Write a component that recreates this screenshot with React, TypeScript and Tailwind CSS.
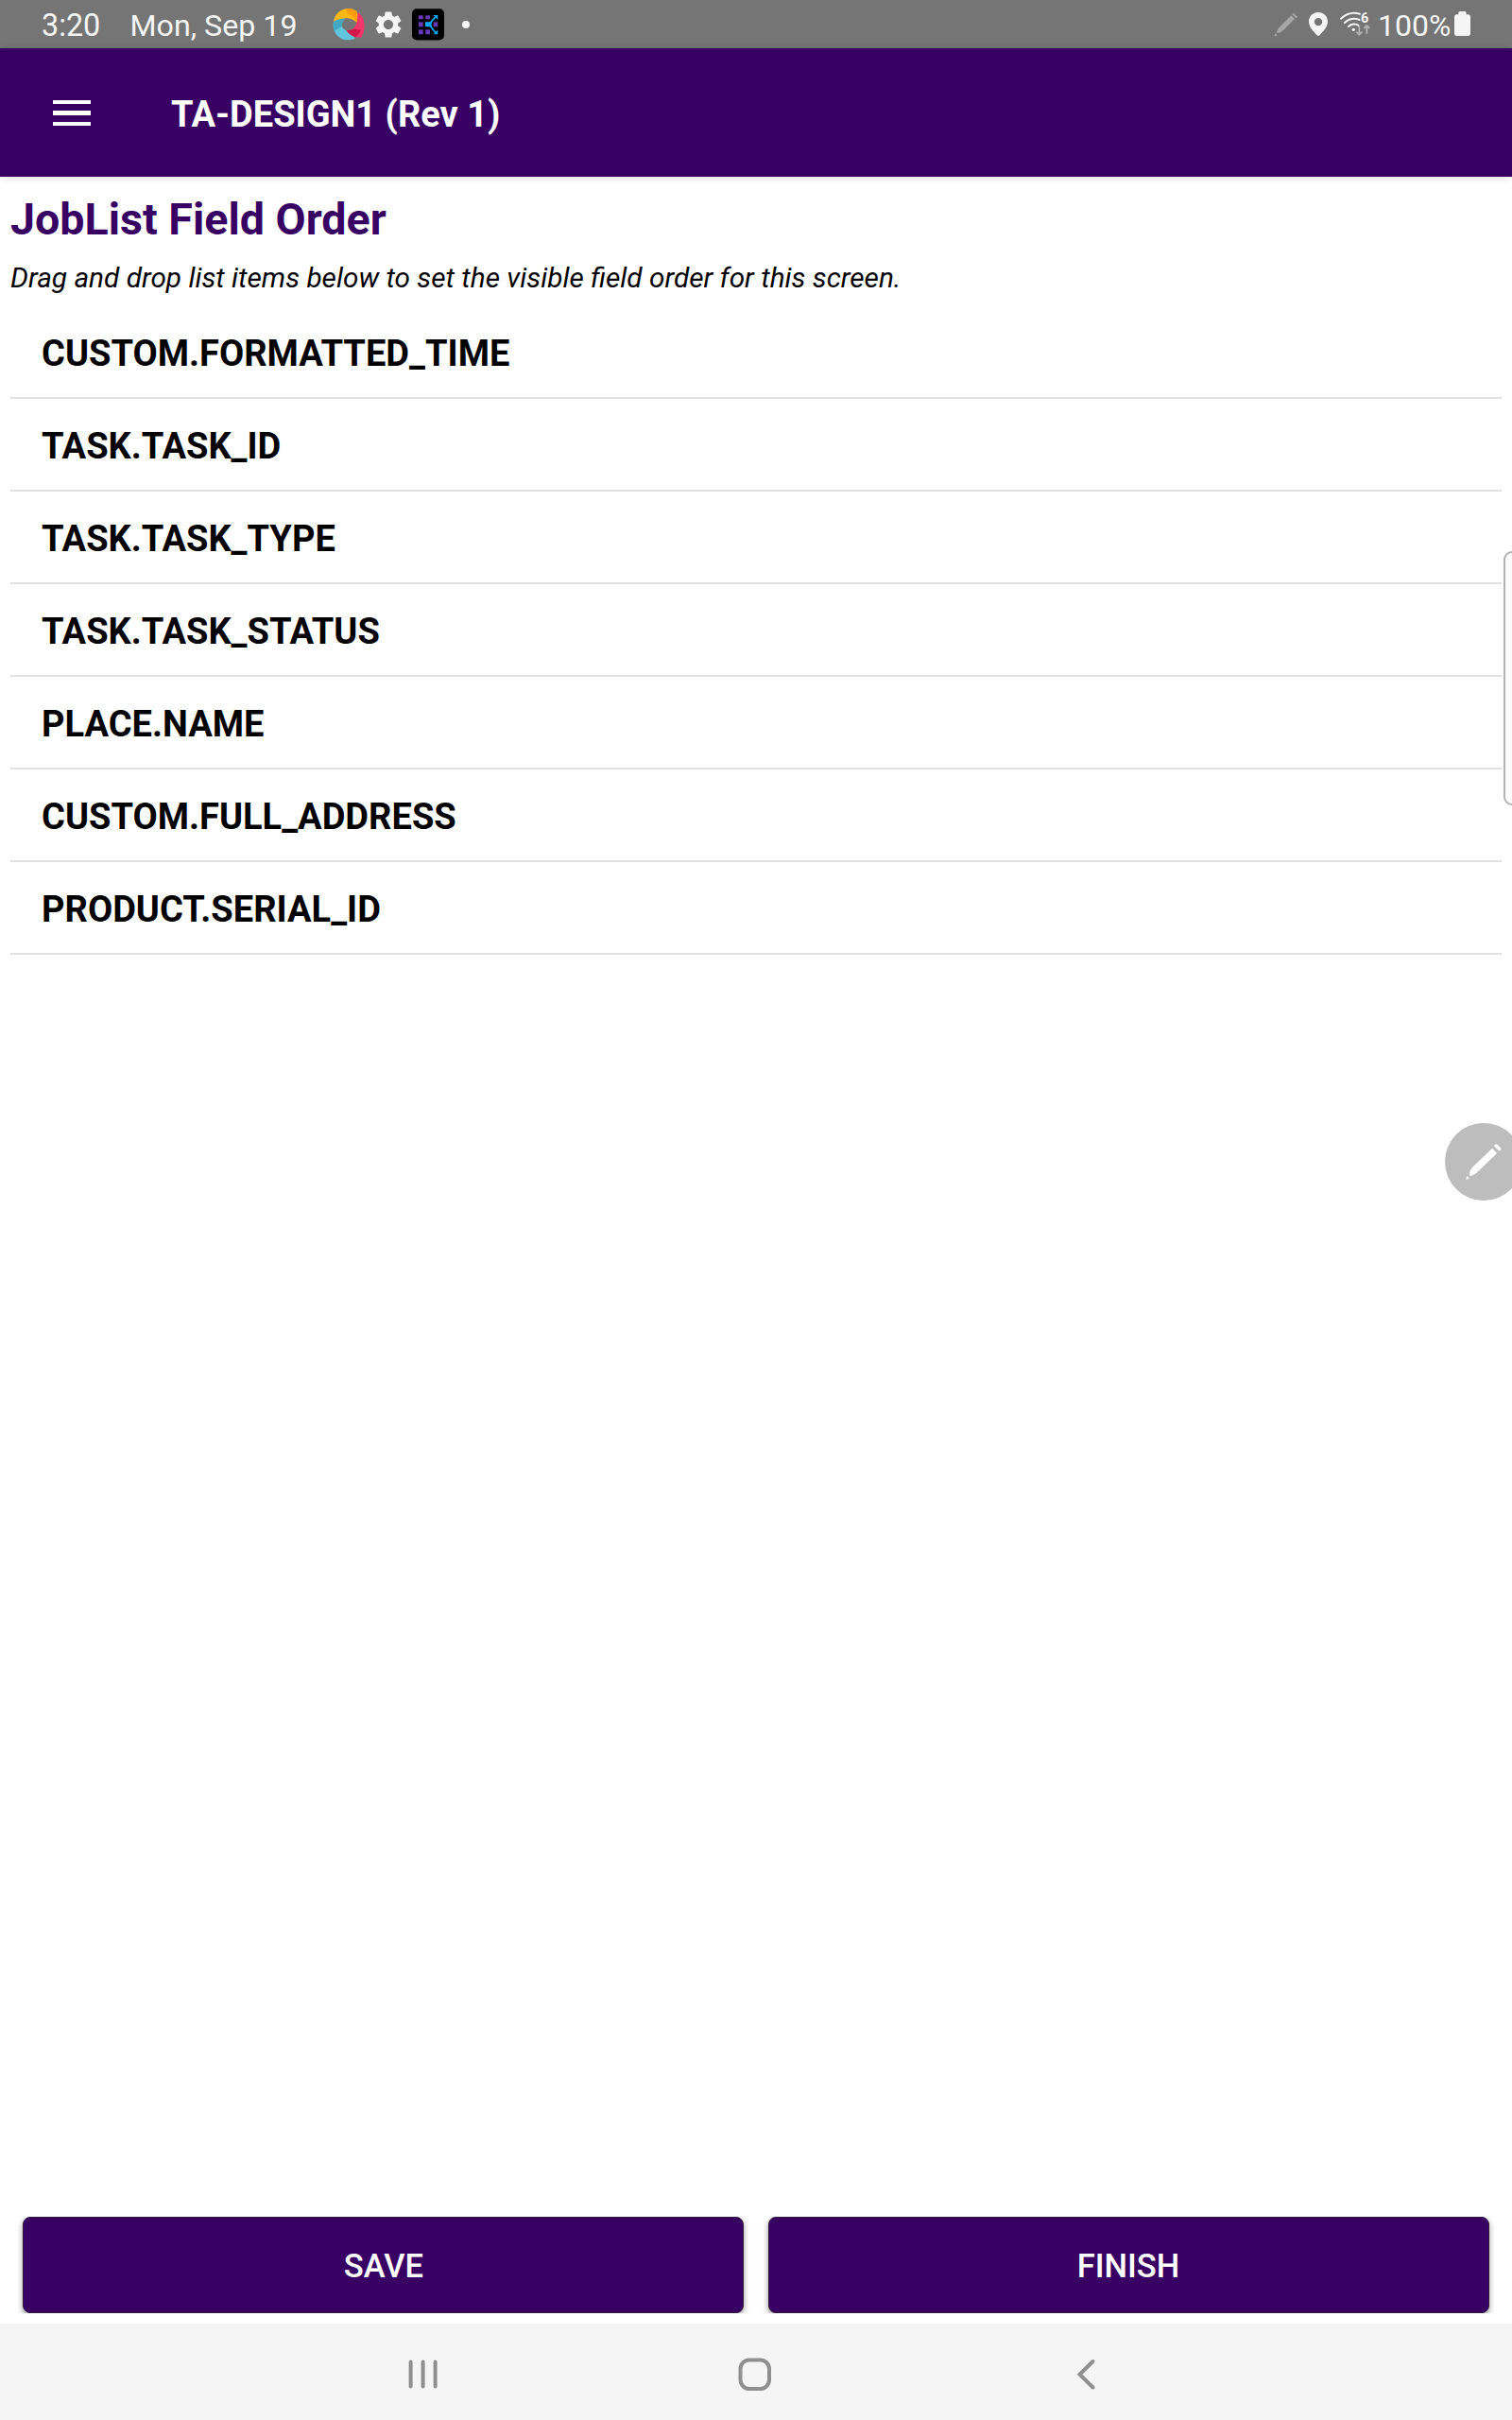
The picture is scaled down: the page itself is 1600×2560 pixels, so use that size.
import React from "react";
import { MdSettings } from "react-icons/md";

const fields = [
  "CUSTOM.FORMATTED_TIME",
  "TASK.TASK_ID",
  "TASK.TASK_TYPE",
  "TASK.TASK_STATUS",
  "PLACE.NAME",
  "CUSTOM.FULL_ADDRESS",
  "PRODUCT.SERIAL_ID",
];

function SwirlIcon() {
  return (
    <svg viewBox="6 15 102 102" className="h-[34px] w-[34px]">
      <path d="M8 66 C8 62 8 60 9 58 C20 50 32 46 46 47 C32 60 32 76 46 83 C60 90 70 102 77 110 C66 115 50 116 40 113 C20 106 7 88 8 66Z" fill="#62c6dd" />
      <path d="M9 58 C20 50 32 46 46 47 C37 55 34 64 36 73 C26 76 16 82 12 88 C8 79 7 68 9 58Z" fill="#42a9c4" />
      <path d="M9 56 C13 32 32 15 56 15 C68 15 77 19 83 25 C87 36 86 48 82 60 C72 48 58 44 46 46 C31 47 18 51 9 56Z" fill="#fdb813" />
      <path d="M50 15 C66 14 77 19 83 25 C87 36 86 48 82 60 C76 48 70 36 50 28Z" fill="#ff9d0a" />
      <path d="M85 26 C100 36 108 52 107 72 C106 84 103 94 98 106 C90 108 80 107 70 102 C60 97 54 92 50 84 C66 86 80 76 84 53 C86 44 86 34 85 26Z" fill="#f0386b" />
      <path d="M50 84 C60 86 68 83 74 78 C84 82 90 84 97 82 C92 94 86 101 78 105 C75 104 73 103 70 102 C60 97 54 92 50 84Z" fill="#d4174a" />
    </svg>
  );
}

function GridAppIcon() {
  return (
    <svg viewBox="288 26 102 102" className="h-[34px] w-[34px]">
      <rect x="288" y="26.5" width="102" height="100" rx="15" fill="#000" />
      <g fill="#673ab7">
        <rect x="309" y="48" width="14" height="12" />
        <rect x="331" y="48" width="14" height="12" />
        <rect x="309" y="69" width="14" height="15" />
        <rect x="309" y="93" width="14" height="15" />
        <rect x="331" y="93" width="14" height="15" />
        <rect x="356" y="69" width="14" height="15" />
      </g>
      <path d="M344 77 C350 65 354 60 363 53 M344 77 C350 88 354 94 363 102" fill="none" stroke="#03a9f4" strokeWidth="5" />
      <g fill="#03a9f4">
        <path d="M330 69 H344 L350 66 V88 L344 84 H330Z" />
        <path d="M355 47 H370 V61 Z" />
        <path d="M370 94 V108 H355 Z" />
      </g>
    </svg>
  );
}

function StatusPen() {
  return (
    <svg viewBox="21 -12 84 153" className="h-[51px] w-7" fill="#a6a6a6">
      <path d="M33 93 C34 83 38 78 44 72 L79 37 L90 48 L55 83 C48 89 43 93 33 93Z" />
      <path d="M82 33 L86 29 L99 41 L94 46Z" />
      <path d="M29 93 L35 99 L29 103 L25 102 Z" />
    </svg>
  );
}

function StatusPin() {
  return (
    <svg viewBox="132 -12 66 153" className="ml-[9px] h-[51px] w-[22px]">
      <path
        fillRule="evenodd"
        fill="#f5f5f5"
        d="M165 27 C148 27 135 40 135 56 C135 75 150 86 161 100 Q165 104 169 100 C180 86 195 75 195 56 C195 40 182 27 165 27Z M165 45 A12.5 12.5 0 1 1 165 70 A12.5 12.5 0 1 1 165 45Z"
      />
    </svg>
  );
}

function StatusWifi() {
  return (
    <svg viewBox="231 -12 102 153" className="ml-[11px] h-[51px] w-[34px]">
      <g fill="none" stroke="#f5f5f5" strokeWidth="6" strokeLinecap="round">
        <path d="M237 47 C254 31 276 26 297 32" />
        <path d="M249 60 C262 48 280 45 296 51" />
        <path d="M261 72 C270 63 284 62 293 69" />
      </g>
      <circle cx="277" cy="82" r="5" fill="#f5f5f5" />
      <text x="300" y="60" fontSize="43" fontWeight="700" fill="#f5f5f5" fontFamily="Roboto, sans-serif">6</text>
      <g fill="none" stroke="#b0b0b0" strokeWidth="5.5">
        <path d="M295 72 V97 M286 89 L295 98 L304 89" />
        <path d="M319 95 V70 M310 78 L319 69 L328 78" />
      </g>
    </svg>
  );
}

function Battery() {
  return (
    <svg viewBox="657 0 51 153" className="ml-[3px] h-[51px] w-[17px]" fill="#f5f5f5">
      <path d="M670 46 V41 Q670 36 675 36 H690 Q695 36 695 41 V46 H700 Q708 46 708 54 V106 Q708 114 700 114 H665 Q657 114 657 106 V54 Q657 46 665 46Z" />
    </svg>
  );
}

function ActionButton({ children }: { children: React.ReactNode }) {
  return (
    <button className="flex h-[102px] flex-1 items-center justify-center rounded-lg border-[1.5px] border-[#341a3b] bg-[#380063] pt-[3px] text-[34.6px] font-medium text-white shadow-[0_3px_6px_rgba(0,0,0,0.4)]">
      {children}
    </button>
  );
}

export default function App() {
  return (
    <div className="relative flex h-[2560px] w-[1600px] flex-col overflow-hidden bg-white font-[Roboto,sans-serif]">
      <div className="flex h-[51px] shrink-0 items-center bg-[#757575] pr-11 pl-11 text-[32.3px] leading-none text-[#f5f5f5]">
        <span className="w-[93.5px] pt-[3px]">3:20</span>
        <span className="w-[214.5px] pt-[3px] text-[32.2px] whitespace-nowrap">Mon, Sep 19</span>
        <div className="flex items-center gap-2">
          <SwirlIcon />
          <MdSettings className="h-[34px] w-[34px]" />
          <GridAppIcon />
        </div>
        <span className="ml-[19px] h-2 w-2 rounded-full bg-[#f5f5f5]" />
        <div className="ml-auto flex items-center">
          <StatusPen />
          <StatusPin />
          <StatusWifi />
          <span className="ml-[7px] w-[78px] pt-[3px] text-[32px]">100%</span>
          <Battery />
        </div>
      </div>

      <header className="relative flex h-[136px] shrink-0 items-center bg-[#380063] pl-14 shadow-[0_1px_8px_rgba(0,0,0,0.14)]">
        <div className="flex w-[125px] flex-col gap-[7px] pt-px">
          <span className="h-[4.5px] w-10 bg-white" />
          <span className="h-[4.5px] w-10 bg-white" />
          <span className="h-[4.5px] w-10 bg-white" />
        </div>
        <h1 className="pt-1 text-[38px] leading-none font-bold text-white">TA-DESIGN1 (Rev 1)</h1>
      </header>

      <main className="flex-1 px-[11px] pt-[17px]">
        <h2 className="text-[46.6px] leading-[56px] font-bold text-[#380063]">JobList Field Order</h2>
        <p className="mt-3.5 text-[29.77px] leading-10 text-black italic">
          Drag and drop list items below to set the visible field order for this screen.
        </p>
        <ul className="mt-2.5">
          {fields.map((field) => (
            <li
              key={field}
              className="flex h-[98px] items-center border-b-2 border-[#e0e0e0] pt-1 pl-[33px] text-[38.05px] leading-[38px] font-bold text-black"
            >
              {field}
            </li>
          ))}
        </ul>
      </main>

      <div className="mb-[11px] flex shrink-0 gap-[26px] overflow-hidden px-6">
        <ActionButton>
          <span className="pl-px">SAVE</span>
        </ActionButton>
        <ActionButton>
          <span className="pr-px">FINISH</span>
        </ActionButton>
      </div>

      <nav className="flex h-[102px] shrink-0 items-center bg-[#f5f5f5] pt-1.5 pl-[432px] text-[#8f8f8f]">
        <svg viewBox="0 0 32 36" className="h-9 w-8" stroke="currentColor" strokeWidth="4" strokeLinecap="round">
          <path d="M2.6 4.5 V30.5 M15.6 4.5 V30.5 M28.6 4.5 V30.5" />
        </svg>
        <svg viewBox="0 0 36 36" className="ml-[317px] h-9 w-9" fill="none" stroke="currentColor" strokeWidth="4">
          <rect x="2.5" y="2.5" width="30.5" height="30.5" rx="9.5" />
        </svg>
        <svg viewBox="0 0 22 36" className="ml-[321px] h-9 w-[22px]" fill="none" stroke="currentColor" strokeWidth="4" strokeLinecap="round">
          <path d="M18.5 4 L4.5 17.8 L18.5 31.5" />
        </svg>
      </nav>

      {/* Edge panel handle */}
      <div className="absolute top-[583px] left-[1591px] h-[269px] w-5 rounded-[9px] border-2 border-[#b3b3b3] bg-[#fcfcfc]" />

      {/* Floating pen shortcut */}
      <div className="absolute top-[1188px] left-[1529px] h-[82px] w-[82px] rounded-full bg-[#bdbdbd]">
        <svg viewBox="87 54 246 246" className="h-full w-full" fill="#fff">
          <path d="M166 221 C163 211 168 202 176 193 L237 134 L252 150 L192 208 C184 216 175 223 166 221Z" />
          <path d="M243 127 Q245 120 252 121 L264 133 Q268 139 260 143Z" />
          <path d="M157 222 L164 228 L160 232 L153 233 Z" />
        </svg>
      </div>
    </div>
  );
}
